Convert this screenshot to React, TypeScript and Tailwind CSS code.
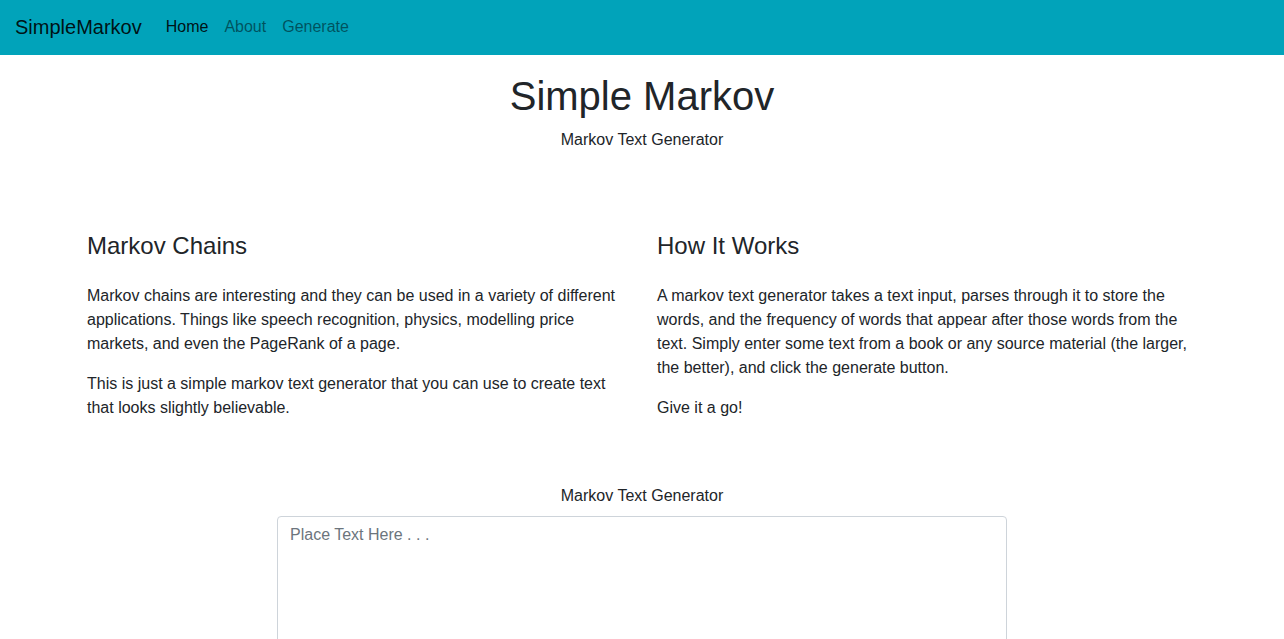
export default function App() {
  const font = "font-['Liberation_Sans',Arial,sans-serif]";
  return (
    <div className={`${font} min-h-screen bg-white text-[#212529] text-base leading-6`}>
      <nav className="h-[55px] bg-[#01a3ba] flex items-center px-[15px] pb-[2px]">
        <span className="text-[20px] text-black/90 mr-4">SimpleMarkov</span>
        <ul className="flex">
          <li className="px-2 text-black/90">Home</li>
          <li className="px-2 text-black/50">About</li>
          <li className="px-2 text-black/50">Generate</li>
        </ul>
      </nav>

      <header className="text-center pt-[17px]">
        <h1 className="text-[40px] leading-[1.2] font-medium mb-2">Simple Markov</h1>
        <p>Markov Text Generator</p>
      </header>

      <main className="max-w-[1140px] mx-auto mt-[80px]">
        <div className="grid grid-cols-2">
          <section className="px-[15px]">
            <h4 className="text-2xl leading-[1.2] font-medium mb-[23px]">Markov Chains</h4>
            <p className="mb-4">
              Markov chains are interesting and they can be used in a variety of different applications. Things like
              speech recognition, physics, modelling price markets, and even the PageRank of a page.
            </p>
            <p className="mb-4">
              This is just a simple markov text generator that you can use to create text that looks slightly
              believable.
            </p>
          </section>
          <section className="px-[15px]">
            <h4 className="text-2xl leading-[1.2] font-medium mb-[23px]">How It Works</h4>
            <p className="mb-4">
              A markov text generator takes a text input, parses through it to store the words, and the frequency of
              words that appear after those words from the text. Simply enter some text from a book or any source
              material (the larger, the better), and click the generate button.
            </p>
            <p className="mb-4">Give it a go!</p>
          </section>
        </div>

        <div className="mt-[48px] mx-[190px] px-[15px]">
          <label className="block text-center mb-2">Markov Text Generator</label>
          <textarea
            rows={8}
            placeholder="Place Text Here . . ."
            className="block w-full border border-[#ced4da] rounded px-3 py-[6px] leading-6 text-[#495057] placeholder:text-[#6c757d] resize-y outline-none"
          />
        </div>
      </main>
    </div>
  );
}
